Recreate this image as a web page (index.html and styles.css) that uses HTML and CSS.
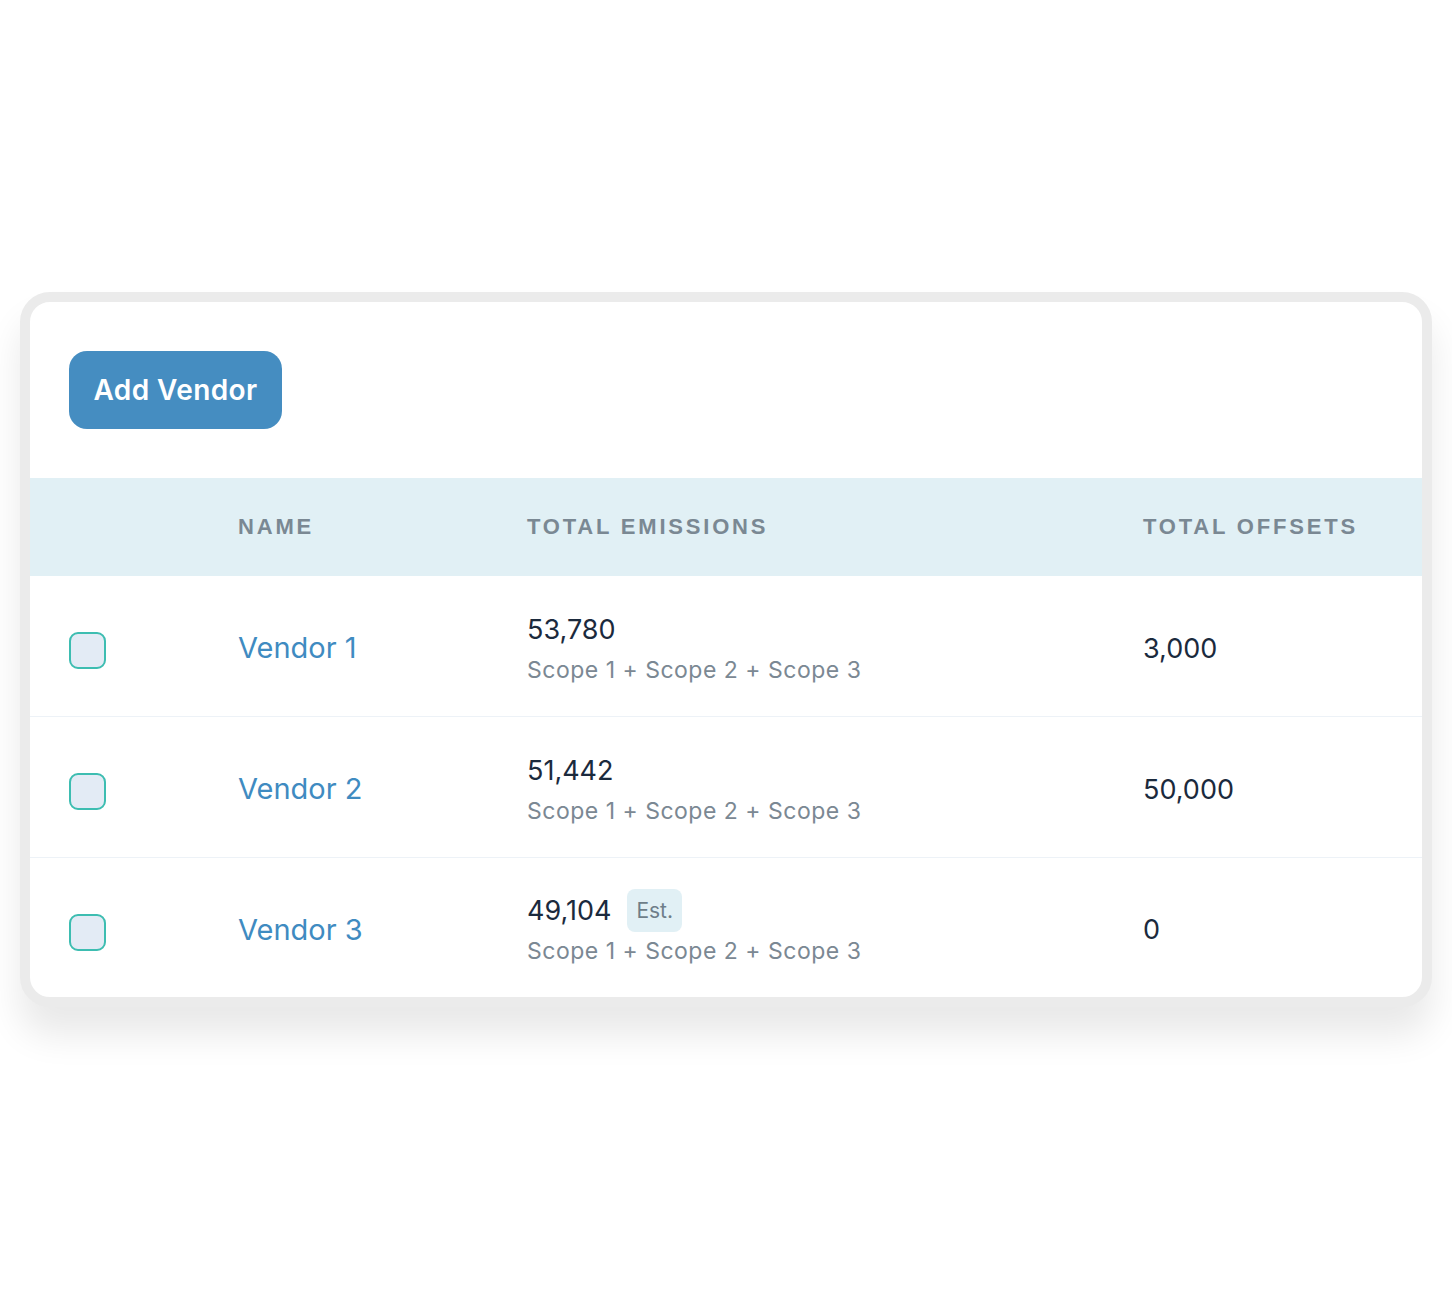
FILE: index.html
```html
<!DOCTYPE html>
<html>
<head>
<meta charset="utf-8">
<link rel="stylesheet" href="styles.css">
</head>
<body>
<div class="page">
  <div class="card">
    <div class="toolbar">
      <button class="btn">Add Vendor</button>
    </div>
    <div class="table">
      <div class="row head">
        <div class="cell"></div>
        <div class="cell th">Name</div>
        <div class="cell th">Total Emissions</div>
        <div class="cell th">Total Offsets</div>
      </div>
      <div class="row">
        <div class="cell"><span class="check"></span></div>
        <div class="cell name">Vendor 1</div>
        <div class="cell em"><div class="num">53,780</div><div class="scope">Scope 1 + Scope 2 + Scope 3</div></div>
        <div class="cell num off">3,000</div>
      </div>
      <div class="row">
        <div class="cell"><span class="check"></span></div>
        <div class="cell name">Vendor 2</div>
        <div class="cell em"><div class="num">51,442</div><div class="scope">Scope 1 + Scope 2 + Scope 3</div></div>
        <div class="cell num off">50,000</div>
      </div>
      <div class="row last">
        <div class="cell"><span class="check"></span></div>
        <div class="cell name">Vendor 3</div>
        <div class="cell em"><div class="num">49,104 <span class="badge">Est.</span></div><div class="scope">Scope 1 + Scope 2 + Scope 3</div></div>
        <div class="cell num off">0</div>
      </div>
    </div>
  </div>
</div>
</body>
</html>
```
FILE: styles.css
```css
* { box-sizing: border-box; }
body { margin: 0; background: #fff; font-family: Inter, "Open Sans", sans-serif; }
.page { padding: 292px 20px 80px; }
.card {
  border: 10px solid #ebebeb;
  border-radius: 30px;
  background: #fff;
  box-shadow: 0 28px 36px rgba(0,0,0,0.09);
  overflow: hidden;
}
.toolbar { padding: 49px 39px 49px; }
.btn {
  display: block;
  width: 213px; height: 78px;
  border: 0; border-radius: 18px;
  background: #458dc1; color: #fff;
  font-family: inherit; font-size: 28px; font-weight: 600; letter-spacing: 0.4px;
  padding: 0;
}
.row {
  display: grid;
  grid-template-columns: 169px 289px 616px 1fr;
  align-items: center;
  padding-left: 39px;
  height: 141px;
  border-bottom: 1px solid #edf2f7;
}
.row.last { border-bottom: 0; height: 139px; }
.row.head { height: 98px; background: #e1f0f5; border-bottom: 0; }
.th {
  font-family: "Liberation Sans", Arial, sans-serif;
  font-weight: 700; font-size: 22px; letter-spacing: 2.8px;
  text-transform: uppercase; color: #7a8893;
}
.check {
  display: block; width: 37px; height: 37px; margin-top: 9px;
  border: 2px solid #3dbdb1; border-radius: 9px; background: #e3ebf5;
}
.name { font-size: 29px; color: #3f8bc1; padding-top: 3px; }
.em { padding-top: 4px; }
.num { font-size: 27px; line-height: 34px; color: #1b2a3d; display: flex; align-items: center; gap: 16px; }
.off { padding-top: 5px; }
.scope { font-size: 23px; color: #7b8893; margin-top: 9px; letter-spacing: 0.5px; }
.badge {
  font-size: 21px; color: #6e7e89; background: #e1f0f5;
  border-radius: 8px; padding: 8px 9px; line-height: 27px; margin: -5px 0 -4px;
}
```
